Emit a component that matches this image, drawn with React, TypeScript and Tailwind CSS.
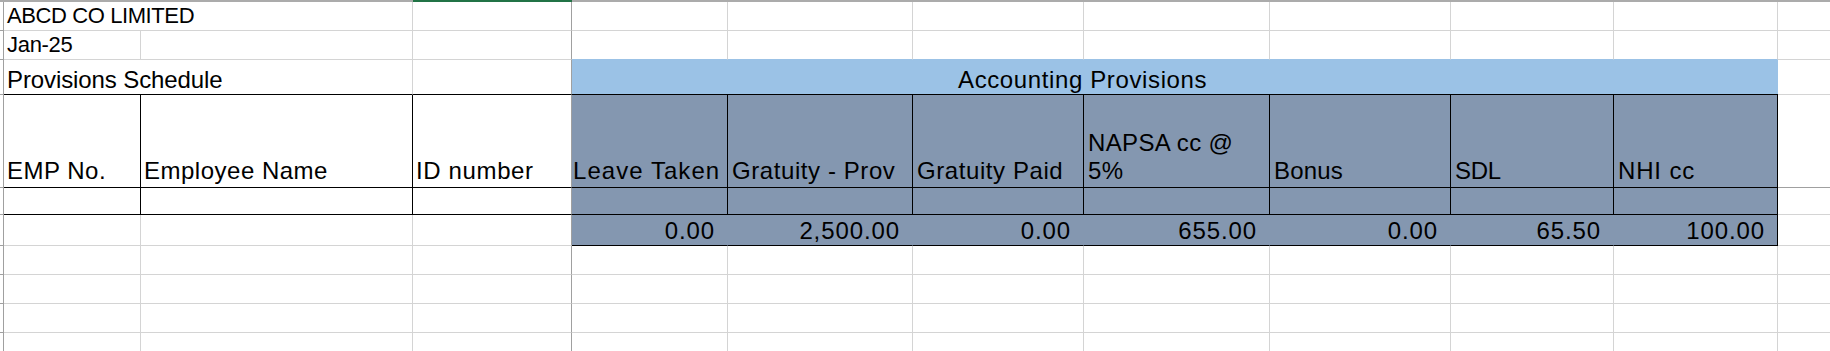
import React from "react";

const stub = "border-r border-b border-r-[#a0a0a0] border-b-[#a0a0a0] bg-white";
const grid = "border-r border-b border-r-[#d4d4d4] border-b-[#d4d4d4]";
const gridC = "border-r border-b border-r-[#a0a0a0] border-b-[#d4d4d4]";

function BlankRow() {
  return (
    <>
      <div className={stub} />
      <div className={grid} />
      <div className={grid} />
      <div className={gridC} />
      <div className={grid} />
      <div className={grid} />
      <div className={grid} />
      <div className={grid} />
      <div className={grid} />
      <div className={grid} />
      <div className={grid} />
      <div className={grid} />
    </>
  );
}

const hdr = "border-r border-b border-r-black border-b-black bg-[#8497b0] flex items-end";
const hText = "pb-[2.5px] text-[24px] leading-[28px] whitespace-nowrap";
const numCell = "border-r border-b border-r-[#8497b0] border-b-black bg-[#8497b0] flex items-end justify-end";
const nText = "pr-[12px] pb-[2.5px] text-[24px] leading-none tracking-[0.9px] whitespace-nowrap";

export default function App() {
  return (
    <div className="w-[1830px] h-[351px] overflow-hidden bg-white text-black font-['Liberation_Sans',Arial,sans-serif]">
      <div className="grid grid-cols-[4px_137px_272px_159px_156px_185px_171px_186px_181px_163px_164px_100px] grid-rows-[2px_29px_29px_35px_93px_27px_31px_29px_29px_29px_29px]">
        {/* column header bottom edge */}
        <div className="col-span-3 bg-[#ababab]" />
        <div className="bg-[#217346]" />
        <div className="col-span-8 bg-[#ababab]" />

        {/* Row 1 */}
        <div className={stub} />
        <div className={`col-span-2 ${grid} flex items-end`}>
          <span className="pl-[3px] pb-[3px] text-[22px] leading-none tracking-[-0.4px] whitespace-nowrap">ABCD CO LIMITED</span>
        </div>
        <div className={gridC} />
        <div className={grid} />
        <div className={grid} />
        <div className={grid} />
        <div className={grid} />
        <div className={grid} />
        <div className={grid} />
        <div className={grid} />
        <div className={grid} />

        {/* Row 2 */}
        <div className={stub} />
        <div className={`${grid} flex items-end`}>
          <span className="pl-[3px] pb-[3px] text-[22px] leading-none tracking-[-0.3px] whitespace-nowrap">Jan-25</span>
        </div>
        <div className={grid} />
        <div className={gridC} />
        <div className="border-r border-b border-r-[#d4d4d4] border-b-[#9bc2e6]" />
        <div className="border-r border-b border-r-[#d4d4d4] border-b-[#9bc2e6]" />
        <div className="border-r border-b border-r-[#d4d4d4] border-b-[#9bc2e6]" />
        <div className="border-r border-b border-r-[#d4d4d4] border-b-[#9bc2e6]" />
        <div className="border-r border-b border-r-[#d4d4d4] border-b-[#9bc2e6]" />
        <div className="border-r border-b border-r-[#d4d4d4] border-b-[#9bc2e6]" />
        <div className="border-r border-b border-r-[#d4d4d4] border-b-[#9bc2e6]" />
        <div className={grid} />

        {/* Row 3 */}
        <div className={stub} />
        <div className="col-span-2 border-r border-b border-r-[#d4d4d4] border-b-black flex items-end">
          <span className="pl-[3px] pb-[2.5px] text-[24px] leading-none tracking-[-0.1px] whitespace-nowrap">Provisions Schedule</span>
        </div>
        <div className="border-r border-b border-r-[#a0a0a0] border-b-black" />
        <div className="col-span-7 border-b border-b-black bg-[#9bc2e6] flex items-end">
          <span className="pl-[386px] pb-[2.5px] text-[24px] leading-none tracking-[0.62px] whitespace-nowrap">Accounting Provisions</span>
        </div>
        <div className={grid} />

        {/* Row 4 : headers */}
        <div className={stub} />
        <div className="border-r border-b border-r-black border-b-black flex items-end">
          <span className={`pl-[3px] tracking-[0.5px] ${hText}`}>EMP No.</span>
        </div>
        <div className="border-r border-b border-r-black border-b-black flex items-end">
          <span className={`pl-[3px] tracking-[0.5px] ${hText}`}>Employee Name</span>
        </div>
        <div className="border-r border-b border-r-[#a0a0a0] border-b-black flex items-end">
          <span className={`pl-[3px] tracking-[0.63px] ${hText}`}>ID number</span>
        </div>
        <div className={hdr}>
          <span className={`pl-[1px] tracking-[1.05px] ${hText}`}>Leave Taken</span>
        </div>
        <div className={hdr}>
          <span className={`pl-[4px] tracking-[0.58px] ${hText}`}>Gratuity - Prov</span>
        </div>
        <div className={hdr}>
          <span className={`pl-[4px] tracking-[0.58px] ${hText}`}>Gratuity Paid</span>
        </div>
        <div className={hdr}>
          <span className={`pl-[4px] tracking-[0.35px] ${hText}`}>
            NAPSA cc @
            <br />
            5%
          </span>
        </div>
        <div className={hdr}>
          <span className={`pl-[4px] tracking-[0.15px] ${hText}`}>Bonus</span>
        </div>
        <div className={hdr}>
          <span className={`pl-[4px] tracking-[-0.3px] ${hText}`}>SDL</span>
        </div>
        <div className={hdr}>
          <span className={`pl-[4px] tracking-[0.85px] ${hText}`}>NHI cc</span>
        </div>
        <div className="border-r border-b border-r-[#d4d4d4] border-b-[#a0a0a0]" />

        {/* Row 5 */}
        <div className={stub} />
        <div className="border-r border-b border-r-black border-b-black" />
        <div className="border-r border-b border-r-black border-b-black" />
        <div className="border-r border-b border-r-[#a0a0a0] border-b-black" />
        <div className={hdr} />
        <div className={hdr} />
        <div className={hdr} />
        <div className={hdr} />
        <div className={hdr} />
        <div className={hdr} />
        <div className={hdr} />
        <div className={grid} />

        {/* Row 6 : totals */}
        <div className={stub} />
        <div className={grid} />
        <div className={grid} />
        <div className={gridC} />
        <div className={numCell}><span className={nText}>0.00</span></div>
        <div className={numCell}><span className={nText}>2,500.00</span></div>
        <div className={numCell}><span className={nText}>0.00</span></div>
        <div className={numCell}><span className={nText}>655.00</span></div>
        <div className={numCell}><span className={nText}>0.00</span></div>
        <div className={numCell}><span className={nText}>65.50</span></div>
        <div className="border-r border-b border-r-black border-b-black bg-[#8497b0] flex items-end justify-end">
          <span className={nText}>100.00</span>
        </div>
        <div className={grid} />

        <BlankRow />
        <BlankRow />
        <BlankRow />
        <BlankRow />
      </div>
    </div>
  );
}
